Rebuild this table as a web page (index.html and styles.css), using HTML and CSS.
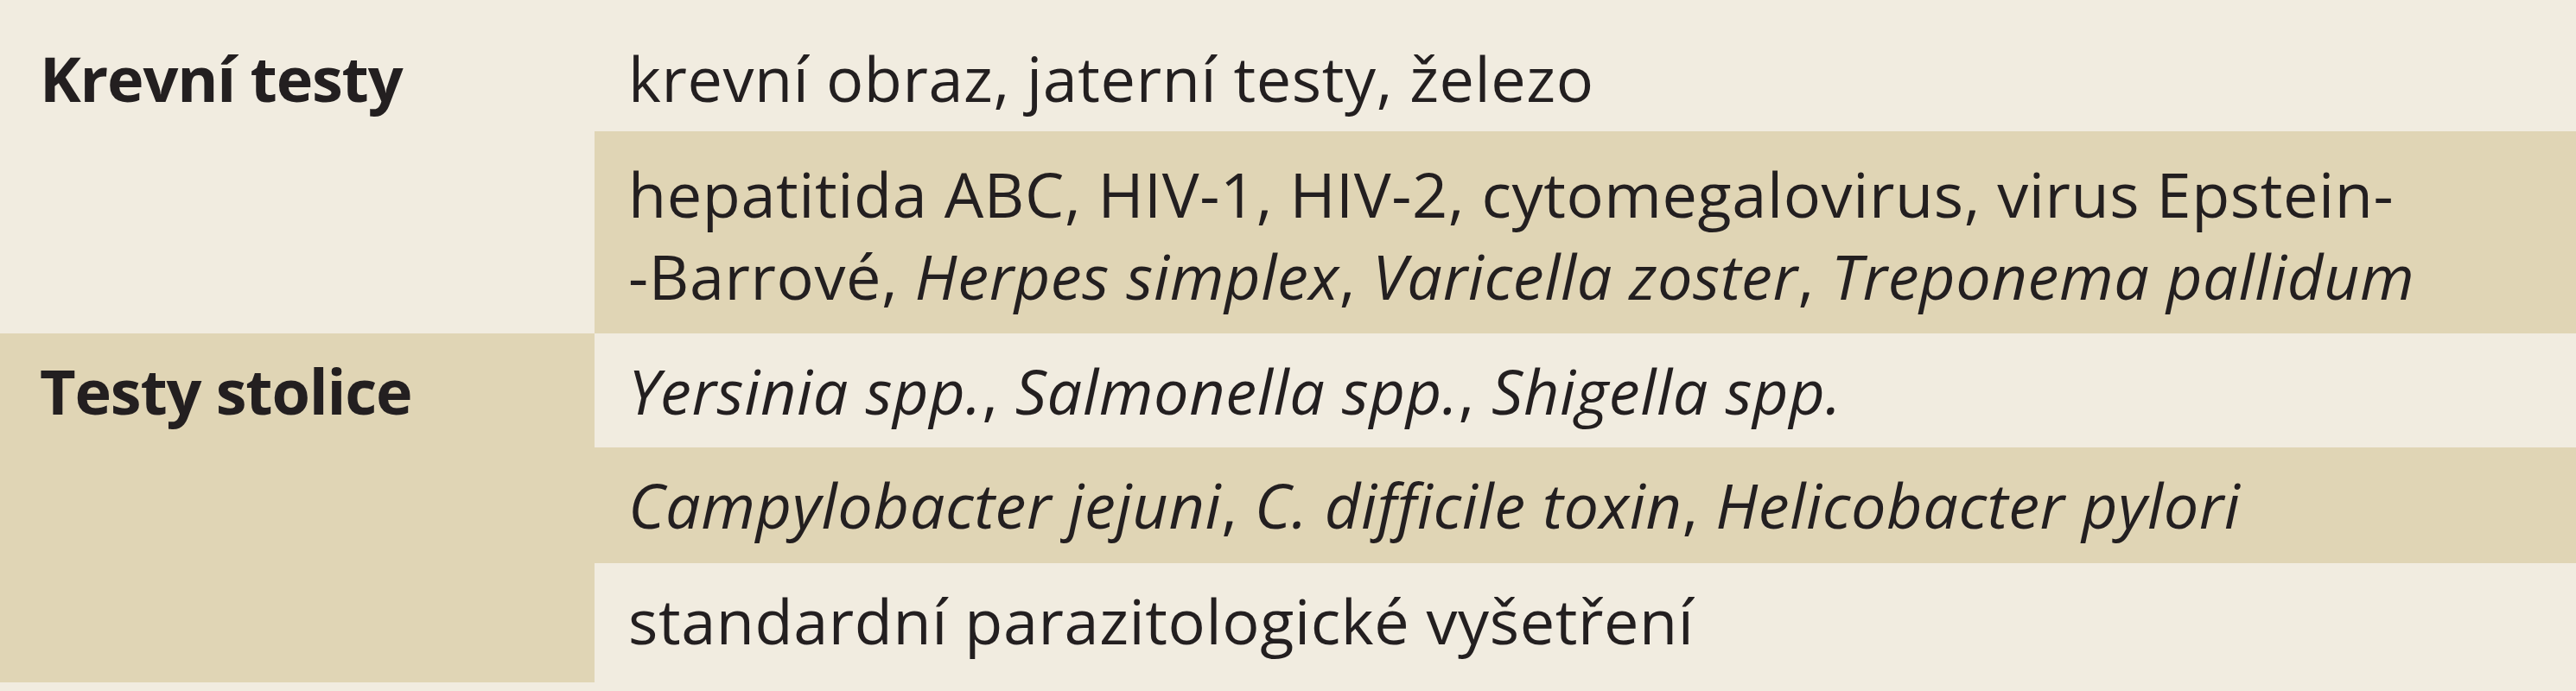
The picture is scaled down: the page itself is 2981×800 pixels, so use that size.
FILE: index.html
```html
<!DOCTYPE html>
<html lang="cs">
<head>
<meta charset="utf-8">
<title>Vyšetření</title>
<link rel="stylesheet" href="styles.css">
</head>
<body>
<div class="table">
  <div class="head head-first">Krevní testy</div>
  <div class="cell light first">krevní obraz, jaterní testy, železo</div>
  <div class="cell dark second">hepatitida ABC, HIV-1, HIV-2, cytomegalovirus, virus Epstein-<br>-Barrové, <i>Herpes simplex</i>, <i>Varicella zoster</i>, <i>Treponema pallidum</i></div>
  <div class="head head-second">Testy stolice</div>
  <div class="cell light"><i>Yersinia spp.</i>, <i>Salmonella spp.</i>, <i>Shigella spp.</i></div>
  <div class="cell dark"><i>Campylobacter jejuni</i>, <i>C. difficile toxin</i>, <i>Helicobacter pylori</i></div>
  <div class="cell light">standardní parazitologické vyšetření</div>
</div>
</body>
</html>
```
FILE: styles.css
```css
html, body {
  margin: 0;
  padding: 0;
  background: #f1ece0;
}
body {
  font-family: "Open Sans", "Noto Sans", "DejaVu Sans", sans-serif;
  font-size: 72px;
  line-height: 95px;
  color: #231f20;
}
.table {
  display: grid;
  grid-template-columns: 688px 1fr;
  grid-template-rows: 152px 234px 132px 134px 138px;
}
.head {
  font-weight: 700;
  letter-spacing: -1.2px;
  padding: 19px 0 0 46px;
  white-space: nowrap;
}
.head-first {
  grid-row: 1 / span 2;
  padding-top: 43px;
  background: #f1ece0;
}
.head-second {
  grid-row: 3 / span 3;
  grid-column: 1;
  background: #e0d5b5;
}
.cell {
  grid-column: 2;
  padding: 19px 0 0 39px;
  white-space: nowrap;
  letter-spacing: 0.6px;
}
.cell.first {
  padding-top: 43px;
}
.cell.second {
  padding-top: 25px;
}
.light {
  background: #f1ece0;
}
.dark {
  background: #e0d5b5;
}
i {
  font-style: italic;
}
```
